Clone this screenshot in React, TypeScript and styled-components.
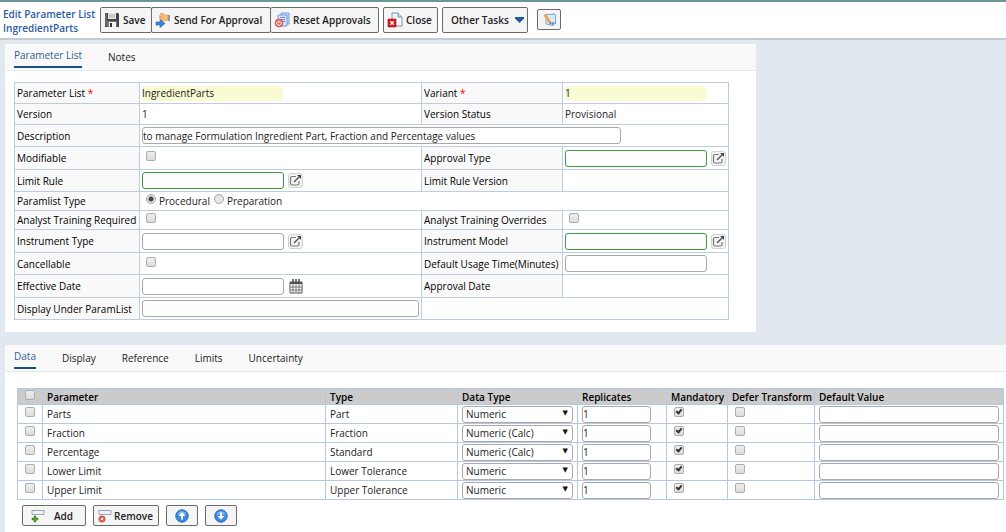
import React from "react";
import styled, { createGlobalStyle } from "styled-components";

const GlobalStyle = createGlobalStyle`
  *, *::before, *::after { box-sizing: border-box; }
  body {
    margin: 0;
    background: #e1e8f0;
    color: #222;
    font: 10px/14px "Open Sans", "Noto Sans", sans-serif;
  }
  input, select, button { font: inherit; color: inherit; margin: 0; }
`;

const Page = styled.div`
  min-height: 100vh;
  display: flex;
  flex-direction: column;
`;

const Header = styled.header`
  display: flex;
  align-items: flex-start;
  height: 40px;
  padding: 5px 3px 0;
  background: #fff;
  border-top: 2px solid #6b9896;
  border-bottom: 2px solid #c3c9d5;
`;

const Main = styled.main`
  display: flex;
  flex: 1;
  flex-direction: column;
  gap: 13px;
  padding: 4px 0 0 5px;
`;

const Title = styled.h1`
  width: 97px;
  margin: 0;
  font-size: 10px;
  line-height: 14px;
  font-weight: 600;
  color: #2b5ba3;
  white-space: nowrap;
`;

const ButtonGroup = styled.div`
  display: flex;
  margin-right: 4px;
`;

const ToolButton = styled.button<{ $width: number; $gap?: number; $pad?: number }>`
  display: flex;
  align-items: center;
  gap: ${(p) => p.$gap ?? 3}px;
  width: ${(p) => p.$width}px;
  height: 26px;
  padding: 0 0 0 ${(p) => p.$pad ?? 3}px;
  border: 1px solid #6a6a6a;
  border-radius: 2px;
  background: #f5f5f5;
  font-weight: 600;
  white-space: nowrap;
  & + & { margin-left: -1px; }
`;

const SmallButton = styled(ToolButton)`
  height: 21px;
  & + & { margin-left: 0; }
`;

const IconOnlyButton = styled(SmallButton)`
  justify-content: center;
  padding: 0;
`;

const NoteButton = styled(IconOnlyButton)`
  margin: 2px 0 0 5px;
`;

const Panel = styled.section<{ $grow?: boolean }>`
  background: #fff;
  ${(p) => (p.$grow ? "flex: 1;" : "width: 75%;")}
`;

const TabBar = styled.nav`
  display: flex;
  gap: 26px;
  height: 27px;
  padding: 0 9px;
  background: #f9f9f9;
  border-bottom: 1px solid #e8e8e8;
`;

const Tab = styled.a<{ $active?: boolean }>`
  height: 24px;
  padding-top: ${(p) => (p.$active ? 4 : 6)}px;
  color: ${(p) => (p.$active ? "#2d6191" : "#222")};
  border-bottom: ${(p) => (p.$active ? "2px solid #1b4f85" : "none")};
  text-decoration: none;
  white-space: nowrap;
`;

const FormBody = styled.div`
  padding: 11px 27px 12px 9px;
`;

const FormTable = styled.table`
  width: 100%;
  table-layout: fixed;
  border-collapse: collapse;
  td, th {
    padding: 0 0 0 2px;
    border: 1px solid #bccde2;
    text-align: left;
    white-space: nowrap;
  }
  th {
    background: #f9f9f9;
    font-weight: 500;
    color: #000;
  }
`;

const Col = styled.col<{ $w?: number }>`
  width: ${(p) => (p.$w ? p.$w + "px" : "auto")};
`;

const Row = styled.tr<{ $h: number }>`
  height: ${(p) => p.$h}px;
`;

const Required = styled.span`
  color: #f00;
`;

const Field = styled.div`
  display: flex;
  align-items: center;
  gap: 4px;
`;

type Tone = "plain" | "green" | "yellow";
const TextBox = styled.input<{ $w: string; $tone?: Tone }>`
  display: block;
  width: ${(p) => p.$w};
  height: ${(p) => (p.$tone === "yellow" ? 15 : 17)}px;
  padding: 0;
  border: ${(p) =>
    p.$tone === "yellow" ? "0" : p.$tone === "green" ? "1px solid #3a9a3c" : "1px solid #a9a9a9"};
  border-radius: 3px;
  background: ${(p) => (p.$tone === "yellow" ? "#fafad2" : "#fff")};
`;

const Check = styled.input`
  appearance: none;
  position: relative;
  display: block;
  width: 10px;
  height: 10px;
  border: 1px solid #adadad;
  border-radius: 2px;
  background: linear-gradient(#eee, #dcdcdc);
  &:checked::after {
    content: "";
    position: absolute;
    left: 2px;
    top: 0;
    width: 4px;
    height: 6px;
    border: solid #333;
    border-width: 0 2px 2px 0;
    transform: rotate(40deg);
  }
`;

const FormCheck = styled(Check)`
  margin: 0 0 4px 4px;
`;

const RadioGroup = styled.div`
  display: flex;
  gap: 4px;
  padding-left: 4px;
`;

const RadioLabel = styled.label`
  display: flex;
  gap: 3px;
`;

const Radio = styled.input`
  appearance: none;
  width: 10px;
  height: 10px;
  border: 1px solid #a5a5a5;
  border-radius: 50%;
  background: #e6e6e6;
  &:checked { background: radial-gradient(#444 0 2px, #e6e6e6 3px); }
`;

const IconButton = styled.button<{ $frame?: boolean }>`
  display: grid;
  place-items: center;
  width: 15px;
  height: 15px;
  padding: 0;
  border: ${(p) => (p.$frame ? "1px solid #d0d0d0" : "0")};
  border-radius: 3px;
  background: ${(p) => (p.$frame ? "#f4f4f4" : "none")};
`;

const GridBody = styled.div`
  padding: 16px 2px 0 12px;
`;

const DataTable = styled.table`
  width: 100%;
  table-layout: fixed;
  border-collapse: collapse;
  td, th {
    padding: 0 4px;
    border: 1px solid #b3c8e4;
    text-align: left;
    white-space: nowrap;
  }
  th {
    background: #cbcbcb;
    color: #000;
    font-weight: 600;
  }
`;

const RowCheck = styled(Check)`
  margin: 0 0 4px 3px;
`;

const SelectWrap = styled.div`
  position: relative;
  width: 111px;
  &::after {
    content: "▼";
    position: absolute;
    right: 5px;
    top: 0;
    font: 7px/15px "DejaVu Sans", sans-serif;
    color: #111;
    pointer-events: none;
  }
`;

const Select = styled.select`
  appearance: none;
  display: block;
  width: 100%;
  height: 17px;
  padding: 0 3px;
  border: 1px solid #a9a9a9;
  border-radius: 3px;
  background: #fff;
  line-height: 14px;
`;

const Actions = styled.div`
  display: flex;
  gap: 7px;
  padding: 5px;
`;

const SaveIcon = () => (
  <svg width="16" height="16" viewBox="0 0 16 16" aria-hidden="true">
    <path d="M1 1h13l1 1v13H1z" fill="#444" />
    <path d="M4 1h8v6H4z" fill="#e8e8e8" />
    <path d="M5 3h6M5 5h6" stroke="#aaa" />
    <path d="M3 9h10v6H3z" fill="#777" />
    <path d="M5 10h7v5H5z" fill="#f2f2f2" />
    <path d="M6 11h2v4H6z" fill="#333" />
    <path d="M2 1v13" stroke="#888" />
  </svg>
);

const SendIcon = () => (
  <svg width="16" height="16" viewBox="0 0 16 16" aria-hidden="true">
    <path d="M13 3h2v6h-2z" fill="#7b9bc9" />
    <path d="M5 2l2-1 3 2h3v5l-4 1-3-1 1-1-3-1 2-1-2-1h3z" fill="#f8bd76" stroke="#dd8b3c" strokeWidth=".6" />
    <path d="M1 10h4V7.500l5 4-5 4V13H1z" fill="#3b82dc" stroke="#2260b4" strokeWidth=".6" />
  </svg>
);

const ResetIcon = () => (
  <svg width="16" height="16" viewBox="0 0 16 16" aria-hidden="true">
    <path d="M7 1h8v11H7z" fill="#c9dafa" stroke="#7c9fe0" />
    <path d="M4 3h9v11H4z" fill="#d7e4fd" stroke="#7598de" />
    <path d="M6 5.500h5M6 7.500h5M6 9.500h5" stroke="#6c90da" />
    <circle cx="5" cy="11" r="4" fill="#e0675a" stroke="#c8473c" strokeWidth=".6" />
    <path d="M3.300 9.500a2.300 2.300 0 1 0 3.400 0M5 8.500v2.500" fill="none" stroke="#fff" />
  </svg>
);

const CloseIcon = () => (
  <svg width="16" height="16" viewBox="0 0 16 16" aria-hidden="true">
    <path d="M5 1h6l4 4v9H5z" fill="#f2f8ff" stroke="#7892ae" />
    <path d="M11 1v4h4" fill="#cddff2" stroke="#7892ae" />
    <path d="M1 7h8v8H1z" fill="#d8141c" stroke="#b00e14" strokeWidth=".6" />
    <path d="M3.300 9.300l3.500 3.500M6.800 9.300l-3.500 3.500" stroke="#fff" strokeWidth="1.300" />
  </svg>
);

const NoteIcon = () => (
  <svg width="15" height="15" viewBox="0 0 15 15" aria-hidden="true">
    <path d="M4 2.500h7V1.500l2.500 1v9l-3 2L4 12z" fill="#d9e9fd" stroke="#79a7e2" />
    <path d="M10.500 13.500v-3l3 1" fill="#93bdf0" stroke="#5b8fd6" />
    <path d="M2.500 2.500l5.500 8" stroke="#f0a13a" strokeWidth="2.400" />
    <path d="M7 11l2-1.300.5 2.800z" fill="#855a2b" />
  </svg>
);

const ArrowDown = () => (
  <svg width="9" height="6" viewBox="0 0 9 6" aria-hidden="true">
    <path d="M0 0h9v1.500L4.500 6 0 1.500z" fill="#1f5a9a" />
  </svg>
);

const OpenIcon = () => (
  <svg width="13" height="13" viewBox="0 0 13 13" fill="none" aria-hidden="true">
    <path d="M7 2.500H3a1.500 1.500 0 0 0-1.500 1.500v5.500A1.500 1.500 0 0 0 3 11h5.500A1.500 1.500 0 0 0 10 9.500V7" stroke="#777" strokeWidth="1.200" />
    <path d="M5 8l5-5" stroke="#555" strokeWidth="1.500" />
    <path d="M8 1h4v4z" fill="#444" />
  </svg>
);

const CalendarIcon = () => (
  <svg width="14" height="15" viewBox="0 0 14 15" aria-hidden="true">
    <path d="M1 3h12v11H1z" fill="#fff" stroke="#555" />
    <path d="M1 3h12v2H1z" fill="#555" />
    <path d="M4 5v9M7 5v9M10 5v9M1 8h12M1 11h12" stroke="#777" />
    <path d="M4 0v4M10 0v4M7 0v4" stroke="#555" strokeWidth="1.600" />
  </svg>
);

const RowIcon = ({ remove }: { remove?: boolean }) => (
  <svg width="15" height="14" viewBox="0 0 15 14" aria-hidden="true">
    <path d="M2 1.500h12v4H2z" fill="#edf2f8" stroke="#97a6b6" />
    {remove ? (
      <>
        <circle cx="5" cy="10" r="3.200" fill="#e05a4f" stroke="#b9372e" strokeWidth=".5" />
        <path d="M3.700 8.700l2.600 2.600M6.300 8.700l-2.600 2.600" stroke="#fff" />
      </>
    ) : (
      <path d="M4 7h2v2h2v2H6v2H4v-2H2V9h2z" fill="#58a12d" stroke="#347a18" strokeWidth=".5" />
    )}
  </svg>
);

const MoveIcon = ({ down }: { down?: boolean }) => (
  <svg width="14" height="14" viewBox="0 0 14 14" aria-hidden="true">
    <circle cx="7" cy="7" r="6.200" fill="#3e8add" stroke="#2768b8" />
    <path d="M2.500 5.500a4.700 4.700 0 0 1 9 0z" fill="#7db5f0" />
    <path
      d={down ? "M6 3.500h2v3.500h2.500L7 10.700 3.500 7H6z" : "M6 10.500h2V7h2.500L7 3.300 3.500 7H6z"}
      fill="#fff"
    />
  </svg>
);

const Lookup = ({ label }: { label: string }) => (
  <IconButton type="button" $frame aria-label={label}>
    <OpenIcon />
  </IconButton>
);

const parameters = [
  { name: "Parts", type: "Part", dataType: "Numeric" },
  { name: "Fraction", type: "Fraction", dataType: "Numeric (Calc)" },
  { name: "Percentage", type: "Standard", dataType: "Numeric (Calc)" },
  { name: "Lower Limit", type: "Lower Tolerance", dataType: "Numeric" },
  { name: "Upper Limit", type: "Upper Tolerance", dataType: "Numeric" },
];

const Label = ({ id, children }: { id?: string; children: React.ReactNode }) => (
  <th scope="row">{id ? <label htmlFor={id}>{children}</label> : children}</th>
);

export default function App() {
  return (
    <Page>
      <GlobalStyle />
      <Header>
        <Title>
          Edit Parameter List
          <br />
          IngredientParts
        </Title>
        <ButtonGroup>
          <ToolButton type="button" $width={52}><SaveIcon />Save</ToolButton>
          <ToolButton type="button" $width={120}><SendIcon />Send For Approval</ToolButton>
          <ToolButton type="button" $width={109}><ResetIcon />Reset Approvals</ToolButton>
        </ButtonGroup>
        <ButtonGroup>
          <ToolButton type="button" $width={55}><CloseIcon />Close</ToolButton>
        </ButtonGroup>
        <ButtonGroup>
          <ToolButton type="button" $width={86} $gap={6} $pad={8}>Other Tasks<ArrowDown /></ToolButton>
        </ButtonGroup>
        <NoteButton type="button" $width={24} aria-label="Edit notes"><NoteIcon /></NoteButton>
      </Header>

      <Main>
        <Panel>
          <TabBar>
            <Tab href="#parameter-list" $active>Parameter List</Tab>
            <Tab href="#notes">Notes</Tab>
          </TabBar>
          <FormBody>
            <FormTable>
              <colgroup>
                <Col $w={125} />
                <Col $w={282} />
                <Col $w={141} />
                <Col />
              </colgroup>
              <tbody>
                <Row $h={21}>
                  <Label id="list">Parameter List <Required>*</Required></Label>
                  <td><Field><TextBox id="list" $w="141px" $tone="yellow" defaultValue="IngredientParts" /></Field></td>
                  <Label id="variant">Variant <Required>*</Required></Label>
                  <td><Field><TextBox id="variant" $w="141px" $tone="yellow" defaultValue="1" /></Field></td>
                </Row>
                <Row $h={21}>
                  <Label>Version</Label>
                  <td>1</td>
                  <Label>Version Status</Label>
                  <td>Provisional</td>
                </Row>
                <Row $h={22}>
                  <Label id="description">Description</Label>
                  <td colSpan={3}>
                    <Field>
                      <TextBox
                        id="description"
                        $w="479px"
                        defaultValue="to manage Formulation Ingredient Part, Fraction and Percentage values"
                      />
                    </Field>
                  </td>
                </Row>
                <Row $h={23}>
                  <Label id="modifiable">Modifiable</Label>
                  <td><FormCheck id="modifiable" type="checkbox" /></td>
                  <Label id="approval">Approval Type</Label>
                  <td><Field><TextBox id="approval" $w="142px" $tone="green" /><Lookup label="Look up approval type" /></Field></td>
                </Row>
                <Row $h={22}>
                  <Label id="limit">Limit Rule</Label>
                  <td><Field><TextBox id="limit" $w="142px" $tone="green" /><Lookup label="Look up limit rule" /></Field></td>
                  <Label>Limit Rule Version</Label>
                  <td />
                </Row>
                <Row $h={19}>
                  <Label>Paramlist Type</Label>
                  <td colSpan={3}>
                    <RadioGroup>
                      <RadioLabel><Radio type="radio" name="kind" defaultChecked />Procedural</RadioLabel>
                      <RadioLabel><Radio type="radio" name="kind" />Preparation</RadioLabel>
                    </RadioGroup>
                  </td>
                </Row>
                <Row $h={19}>
                  <Label id="required">Analyst Training Required</Label>
                  <td><FormCheck id="required" type="checkbox" /></td>
                  <Label id="overrides">Analyst Training Overrides</Label>
                  <td><FormCheck id="overrides" type="checkbox" /></td>
                </Row>
                <Row $h={23}>
                  <Label id="instrument">Instrument Type</Label>
                  <td><Field><TextBox id="instrument" $w="142px" /><Lookup label="Look up instrument type" /></Field></td>
                  <Label id="model">Instrument Model</Label>
                  <td><Field><TextBox id="model" $w="142px" $tone="green" /><Lookup label="Look up instrument model" /></Field></td>
                </Row>
                <Row $h={22}>
                  <Label id="cancellable">Cancellable</Label>
                  <td><FormCheck id="cancellable" type="checkbox" /></td>
                  <Label id="usage">Default Usage Time(Minutes)</Label>
                  <td><Field><TextBox id="usage" $w="142px" /></Field></td>
                </Row>
                <Row $h={23}>
                  <Label id="effective">Effective Date</Label>
                  <td>
                    <Field>
                      <TextBox id="effective" $w="142px" />
                      <IconButton type="button" aria-label="Pick a date"><CalendarIcon /></IconButton>
                    </Field>
                  </td>
                  <Label>Approval Date</Label>
                  <td />
                </Row>
                <Row $h={22}>
                  <Label id="under">Display Under ParamList</Label>
                  <td><Field><TextBox id="under" $w="277px" /></Field></td>
                  <td colSpan={2} />
                </Row>
              </tbody>
            </FormTable>
          </FormBody>
        </Panel>

        <Panel $grow>
          <TabBar>
            <Tab href="#data" $active>Data</Tab>
            <Tab href="#display">Display</Tab>
            <Tab href="#reference">Reference</Tab>
            <Tab href="#limits">Limits</Tab>
            <Tab href="#uncertainty">Uncertainty</Tab>
          </TabBar>
          <GridBody>
            <DataTable>
              <colgroup>
                <Col $w={25} />
                <Col $w={283} />
                <Col $w={132} />
                <Col $w={120} />
                <Col $w={89} />
                <Col $w={61} />
                <Col $w={87} />
                <Col />
              </colgroup>
              <thead>
                <Row $h={16}>
                  <th><RowCheck type="checkbox" aria-label="Select all" /></th>
                  <th>Parameter</th>
                  <th>Type</th>
                  <th>Data Type</th>
                  <th>Replicates</th>
                  <th>Mandatory</th>
                  <th>Defer Transform</th>
                  <th>Default Value</th>
                </Row>
              </thead>
              <tbody>
                {parameters.map((p) => (
                  <Row key={p.name} $h={19}>
                    <td><RowCheck type="checkbox" aria-label={`Select ${p.name}`} /></td>
                    <td>{p.name}</td>
                    <td>{p.type}</td>
                    <td>
                      <SelectWrap>
                        <Select aria-label={`${p.name} data type`} defaultValue={p.dataType}>
                          <option>Numeric</option>
                          <option>Numeric (Calc)</option>
                        </Select>
                      </SelectWrap>
                    </td>
                    <td><Field><TextBox $w="69px" aria-label={`${p.name} replicates`} defaultValue="1" /></Field></td>
                    <td><RowCheck type="checkbox" defaultChecked aria-label={`${p.name} mandatory`} /></td>
                    <td><RowCheck type="checkbox" aria-label={`${p.name} defer transform`} /></td>
                    <td><Field><TextBox $w="100%" aria-label={`${p.name} default value`} /></Field></td>
                  </Row>
                ))}
              </tbody>
            </DataTable>
            <Actions>
              <SmallButton type="button" $width={64} $gap={9} $pad={7}><RowIcon />Add</SmallButton>
              <SmallButton type="button" $width={66} $gap={2}><RowIcon remove />Remove</SmallButton>
              <IconOnlyButton type="button" $width={32} aria-label="Move up"><MoveIcon /></IconOnlyButton>
              <IconOnlyButton type="button" $width={32} aria-label="Move down"><MoveIcon down /></IconOnlyButton>
            </Actions>
          </GridBody>
        </Panel>
      </Main>
    </Page>
  );
}
